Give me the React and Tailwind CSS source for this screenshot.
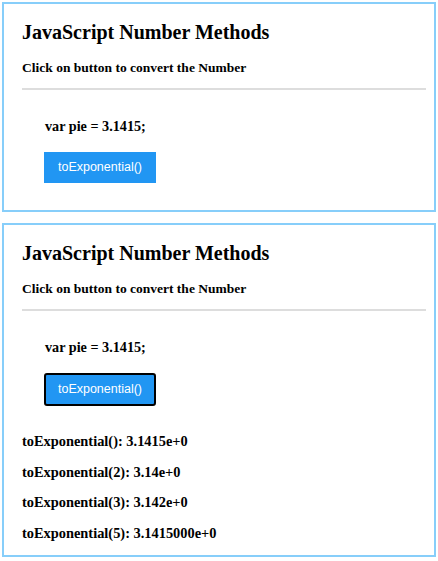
const results = [
    "toExponential(): 3.1415e+0",
    "toExponential(2): 3.14e+0",
    "toExponential(3): 3.142e+0",
    "toExponential(5): 3.1415000e+0",
];

function Panel({ focused, children }) {
    return (
        <div
            className={
                focused
                    ? "border-2 border-[#87cefa] pl-[18px] pr-[8px] bg-white"
                    : "border-2 border-[#87cefa] pl-[18px] pr-[8px] pb-[27px] bg-white"
            }
        >
            <h2 className="mt-[16px] text-[20px] leading-[24px] font-bold">
                JavaScript Number Methods
            </h2>
            <p className="mt-[16px] text-[13.5px] leading-[16px] font-bold">
                Click on button to convert the Number
            </p>
            <div className="mt-[12px] border-t-2 border-[#dddddd]" />
            <p className="mt-[28px] ml-[23px] text-[14.2px] leading-[17px] font-bold">
                var pie = 3.1415;
            </p>
            <button
                className={
                    focused
                        ? "mt-[17px] ml-[22px] w-[112px] h-[33px] bg-[#2196f3] text-white text-[12.5px] font-['Liberation_Sans',Arial,sans-serif] border-2 border-black rounded-[3px]"
                        : "mt-[17px] ml-[22px] w-[112px] h-[31px] bg-[#2196f3] text-white text-[12.5px] font-['Liberation_Sans',Arial,sans-serif]"
                }
            >
                toExponential()
            </button>
            {children}
        </div>
    );
}

export default function App() {
    return (
        <div className="min-h-[561px] bg-white text-black px-[2px] pt-[2px] font-['Liberation_Serif','Times_New_Roman',serif]">
            <div className="flex flex-col gap-[11px]">
                <Panel />
                <Panel focused>
                    <div className="mt-[27px] mb-[13px] flex flex-col gap-[13.5px]">
                        {results.map((r) => (
                            <p key={r} className="text-[14.4px] leading-[17px] font-bold">
                                {r}
                            </p>
                        ))}
                    </div>
                </Panel>
            </div>
        </div>
    );
}
